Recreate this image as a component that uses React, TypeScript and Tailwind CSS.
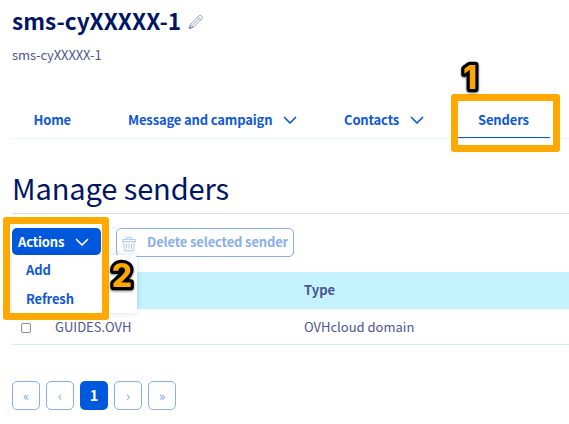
import type { ReactNode } from "react";

function Chevron({ className = "" }: { className?: string }) {
  return (
    <svg className={className} width="14" height="9" viewBox="0 0 14 9" fill="none" stroke="currentColor" strokeWidth="1.7" strokeLinecap="round" strokeLinejoin="round">
      <path d="M1.5 1.5 L7 7 L12.5 1.5" />
    </svg>
  );
}

function Pencil() {
  return (
    <svg className="ml-[7px] mt-px" width="16" height="16" viewBox="0 0 16 16" fill="none" stroke="#7f86bb" strokeWidth="0.8" strokeLinejoin="round">
      <path d="M1.3 14.4 L2.4 10.4 L10.9 1.9 Q12.2 0.7 13.6 2 Q15 3.4 13.8 4.8 L5.3 13.3 Z M2.4 10.4 L5.3 13.3 M9.7 3.1 L12.6 6 M4 11.6 L11 4.6" />
      <path d="M1.3 14.4 L1.9 12.3 L3.4 13.8 Z" fill="#4d5592" />
    </svg>
  );
}

function Trash() {
  return (
    <svg className="mt-[3px] shrink-0" width="14" height="16" viewBox="0 0 14 16" fill="none" stroke="#a9c4f3" strokeWidth="0.9">
      <path d="M0.5 3.5 H13.5 V5.5 H0.5 Z M4.5 3.5 V1.3 H9.5 V3.5 M1.7 5.5 L2.3 14.8 H11.7 L12.3 5.5 M4.5 7.5 V12.8 M7 7.5 V12.8 M9.5 7.5 V12.8" />
    </svg>
  );
}

function Marker({ children, className }: { children: string; className: string }) {
  return (
    <svg className={className} width="34" height="42" viewBox="0 0 34 42">
      <text x="17" y="32" textAnchor="middle" fontSize="32" fontWeight="800" fill="#ffa800" stroke="#000" strokeWidth="6.5" strokeLinejoin="round" paintOrder="stroke" className="font-['Inter',sans-serif] drop-shadow-[0_1px_1px_rgba(0,0,0,0.5)]">
        {children}
      </text>
    </svg>
  );
}

function Page({ children, active = false }: { children: ReactNode; active?: boolean }) {
  return (
    <button
      className={
        active
          ? "flex h-[29px] w-7 items-center justify-center rounded-[5px] bg-[#0058dd] text-[14.5px] leading-none font-bold text-white"
          : "flex h-[29px] w-7 items-center justify-center rounded-[5px] border border-[#85aeed] text-[13px] leading-none text-[#7ba3ea]"
      }
    >
      {children}
    </button>
  );
}

export default function App() {
  return (
    <div className="relative h-[424px] w-[569px] overflow-hidden bg-white pl-3 font-['Noto_Sans_CJK_SC',sans-serif] text-[14px] text-[#4d5592]">
      <header className="h-[102px] pt-[9px]">
        <div className="flex h-6 items-center">
          <h1 className="text-[22.6px] leading-6 font-bold whitespace-nowrap text-[#001664]">sms-cyXXXXX-1</h1>
          <Pencil />
        </div>
        <p className="mt-[14px] text-[13px] leading-4 tracking-[-0.1px]">sms-cyXXXXX-1</p>
      </header>

      <nav className="flex h-[37px] border-b border-[#e3f6fd] text-[13px] leading-[35px] font-bold tracking-[-0.15px] whitespace-nowrap text-[#0f58d6]">
        <a className="w-[94px] shrink-0 pl-[21.5px]">Home</a>
        <a className="flex h-[35px] w-[216px] shrink-0 items-center pl-[22px]">
          <span className="w-[155px] shrink-0">Message and campaign</span>
          <Chevron className="mt-px" />
        </a>
        <a className="flex h-[35px] w-[136px] shrink-0 items-center pl-[22px]">
          <span className="w-[66px]">Contacts</span>
          <Chevron className="mt-px" />
        </a>
        <a className="h-9 w-[92px] shrink-0 border-b border-[#0f58d6] pl-5">Senders</a>
      </nav>

      <main>
        <h2 className="h-[75px] border-b border-[#dcdde0] pt-[32px] text-[29px] leading-8 tracking-[-0.1px] whitespace-nowrap text-[#001664]">Manage senders</h2>
        <div className="mt-[14px] flex gap-[15px] text-[13px] leading-[27px] font-bold tracking-[-0.15px] whitespace-nowrap">
          <div className="relative h-7 w-[89px]">
            <button className="flex h-[27px] w-full items-center rounded-[5px] bg-[#0058dd] pl-[6px] text-white">
              <span className="w-[57px] text-left">Actions</span>
              <Chevron className="mt-px" />
            </button>
            <ul className="absolute top-[27px] left-0 z-10 h-[58px] w-[125px] rounded-[4px] bg-white pl-[14px] leading-[29px] text-[#0f58d6] shadow-[0_0_6px_rgba(0,14,156,0.15)]">
              <li>Add</li>
              <li>Refresh</li>
            </ul>
          </div>
          <button className="flex h-[29px] w-[178px] items-center rounded-[5px] border border-[#85aeed] pl-[5px] text-[#8baeeb]">
            <Trash />
            <span className="ml-[11px] pb-[2px]">Delete selected sender</span>
          </button>
        </div>

        <table className="mt-[15px] w-full table-fixed border-collapse text-left">
          <thead>
            <tr className="h-[37px] bg-[#c4f3ff]">
              <th className="w-[43px]" />
              <th className="w-[249px]" />
              <th className="p-0 pb-[2px] text-[13px] leading-5 font-bold">Type</th>
            </tr>
          </thead>
          <tbody>
            <tr className="h-[35px] border-b border-[#c4f3ff]">
              <td className="p-0 pl-[9px]">
                <span className="mt-[3px] block h-[10px] w-[10px] rounded-[2px] border border-[#8b8b8b]" />
              </td>
              <td className="p-0 pt-[2px] text-[13px] leading-5">GUIDES.OVH</td>
              <td className="p-0 pt-[2px] text-[13px] leading-5">OVHcloud domain</td>
            </tr>
          </tbody>
        </table>

        <div className="mt-9 flex gap-[6px]">
          <Page>«</Page>
          <Page>‹</Page>
          <Page active>1</Page>
          <Page>›</Page>
          <Page>»</Page>
        </div>
      </main>

      <div className="absolute top-[94px] left-[451px] z-20 h-[58px] w-[109px] rounded-[3px] border-[7px] border-[#ffa800]" />
      <div className="absolute top-[217px] left-[3px] z-20 h-[103px] w-[106px] rounded-[3px] border-[7px] border-[#ffa800]" />
      <Marker className="absolute top-[57px] left-[453px] z-30">1</Marker>
      <Marker className="absolute top-[255px] left-[105px] z-30">2</Marker>
    </div>
  );
}
